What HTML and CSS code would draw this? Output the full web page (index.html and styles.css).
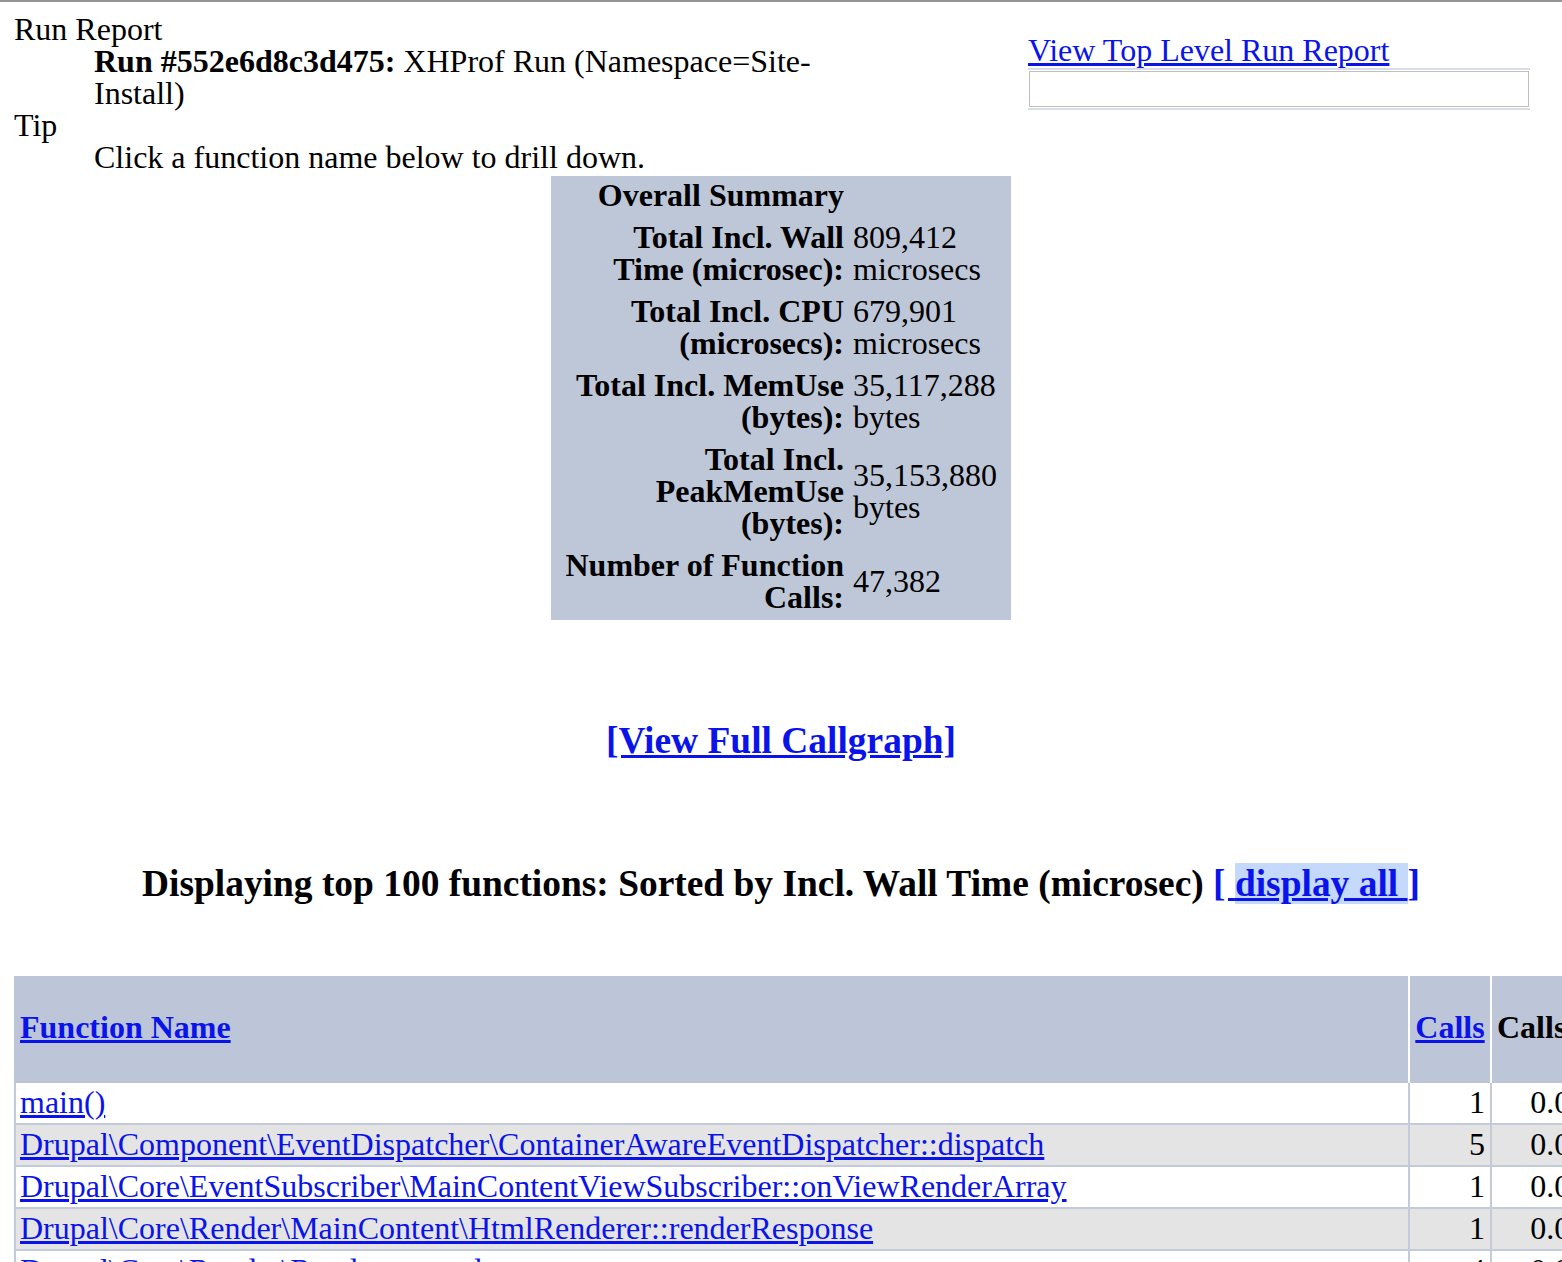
FILE: index.html
```html
<!DOCTYPE html>
<html lang="en">
<head>
<meta charset="utf-8">
<title>XHProf: Hierarchical Profiler Report</title>
<link rel="stylesheet" href="styles.css">
</head>
<body>
<div class="page">
  <div class="header">
    <div class="left">
      <dl class="run-info">
        <dt>Run Report</dt>
        <dd><b>Run #552e6d8c3d475:</b> XHProf Run (Namespace=Site-Install)</dd>
        <dt>Tip</dt>
        <dd>Click a function name below to drill down.</dd>
      </dl>
    </div>
    <div class="right">
      <a class="link" href="#">View Top Level Run Report</a>
      <div class="box"><div class="box-inner"></div></div>
    </div>
  </div>

  <table class="summary">
    <tr><th class="label">Overall Summary</th><td class="value"></td></tr>
    <tr><td class="label">Total Incl. Wall Time (microsec):</td><td class="value">809,412 microsecs</td></tr>
    <tr><td class="label">Total Incl. CPU (microsecs):</td><td class="value">679,901 microsecs</td></tr>
    <tr><td class="label">Total Incl. MemUse (bytes):</td><td class="value">35,117,288 bytes</td></tr>
    <tr><td class="label">Total Incl. PeakMemUse (bytes):</td><td class="value">35,153,880 bytes</td></tr>
    <tr><td class="label">Number of Function Calls:</td><td class="value">47,382</td></tr>
  </table>

  <h3 class="callgraph"><a class="link" href="#">[View Full Callgraph]</a></h3>

  <h3 class="display">Displaying top 100 functions: Sorted by Incl. Wall Time (microsec) <a class="link" href="#">[ <span class="sel">display all </span>]</a></h3>

  <table class="funcs">
    <thead>
      <tr>
        <th class="c-name"><a class="link" href="#">Function Name</a></th>
        <th class="c-calls"><a class="link" href="#">Calls</a></th>
        <th class="c-pct">Calls%</th>
        <th class="c-num"><a class="link" href="#">Incl. Wall Time (microsec)</a></th>
        <th class="c-pct">IWall%</th>
        <th class="c-num"><a class="link" href="#">Excl. Wall Time (microsec)</a></th>
        <th class="c-pct">EWall%</th>
      </tr>
    </thead>
    <tbody>
      <tr class="odd"><td><a class="link" href="#">main()</a></td><td class="num">1</td><td class="num">0.0%</td><td class="num">809,412</td><td class="num">100.0%</td><td class="num">73</td><td class="num">0.0%</td></tr>
      <tr class="even"><td><a class="link" href="#">Drupal\Component\EventDispatcher\ContainerAwareEventDispatcher::dispatch</a></td><td class="num">5</td><td class="num">0.0%</td><td class="num">689,121</td><td class="num">85.1%</td><td class="num">21</td><td class="num">0.0%</td></tr>
      <tr class="odd"><td><a class="link" href="#">Drupal\Core\EventSubscriber\MainContentViewSubscriber::onViewRenderArray</a></td><td class="num">1</td><td class="num">0.0%</td><td class="num">612,034</td><td class="num">75.6%</td><td class="num">9</td><td class="num">0.0%</td></tr>
      <tr class="even"><td><a class="link" href="#">Drupal\Core\Render\MainContent\HtmlRenderer::renderResponse</a></td><td class="num">1</td><td class="num">0.0%</td><td class="num">611,958</td><td class="num">75.6%</td><td class="num">14</td><td class="num">0.0%</td></tr>
      <tr class="odd"><td><a class="link" href="#">Drupal\Core\Render\Renderer::render</a></td><td class="num">4</td><td class="num">0.0%</td><td class="num">598,310</td><td class="num">73.9%</td><td class="num">52</td><td class="num">0.0%</td></tr>
    </tbody>
  </table>
</div>
</body>
</html>
```

FILE: styles.css
```css
html {
  overflow: hidden;
}

body {
  margin: 0;
  border-top: 2px solid #959595;
  font-family: "Liberation Serif", "Times New Roman", serif;
  font-size: 32px;
  line-height: 32px;
  color: #000;
  background: #fff;
}

.page {
  padding: 0 14px;
}

.link {
  color: #0a14ea;
  text-decoration: underline;
}

/* header */
.header {
  display: flex;
  align-items: flex-start;
}

.left {
  width: 866px;
  margin-top: 11px;
}

.run-info {
  margin: 0;
}

.run-info dt {
  margin: 0;
}

.run-info dd {
  margin: 0 0 0 80px;
}

.right {
  width: 502px;
  margin-left: 148px;
  margin-top: 32px;
}

.box {
  margin-top: 2px;
  border-top: 2px solid #d9dde9;
  border-bottom: 2px solid #d9dde9;
  padding: 1px 1px;
}

.box-inner {
  height: 34px;
  border: 1px solid #bfbfbf;
}

/* overall summary */
.summary {
  margin: 3px auto 0;
  width: 460px;
  table-layout: fixed;
  border-collapse: collapse;
  background: #bec7d8;
}

.summary .label {
  width: 282px;
  padding: 3px 3px 7px 11px;
  text-align: right;
  font-weight: bold;
  vertical-align: middle;
}

.summary .value {
  padding: 3px 12px 7px 6px;
  text-align: left;
  vertical-align: middle;
}

/* headings */
h3 {
  font-size: 37.44px;
  line-height: 43px;
  font-weight: bold;
  text-align: center;
  margin: 0;
}

.callgraph {
  margin-top: 99px;
}

.display {
  margin-top: 100px;
}

.sel {
  background: #c4d9fb;
}

/* functions table */
.funcs {
  margin-top: 71px;
  border-collapse: separate;
  border-spacing: 0;
  table-layout: fixed;
  width: 2192px;
}

.funcs th {
  background: #bdc6d8;
  border-left: 2px solid #fff;
  padding: 3px 4px 8px;
  height: 96px;
  vertical-align: middle;
  font-weight: bold;
  text-align: center;
}

.funcs th.c-name {
  width: 1384px;
  border-left-color: #bdc6d8;
  text-align: left;
}

.funcs th.c-calls {
  width: 72px;
}

.funcs th.c-pct {
  width: 101px;
  padding-left: 5px;
  text-align: left;
}

.funcs th.c-num {
  width: 180px;
}

.funcs td {
  border-left: 2px solid #c3cbdb;
  border-bottom: 2px solid #c3cbdb;
  padding: 3px 4px 5px;
  white-space: nowrap;
}

.funcs td.num {
  text-align: right;
  padding-right: 5px;
}

.funcs tr.odd td {
  background: #fff;
}

.funcs tr.even td {
  background: #e4e4e4;
}
```
